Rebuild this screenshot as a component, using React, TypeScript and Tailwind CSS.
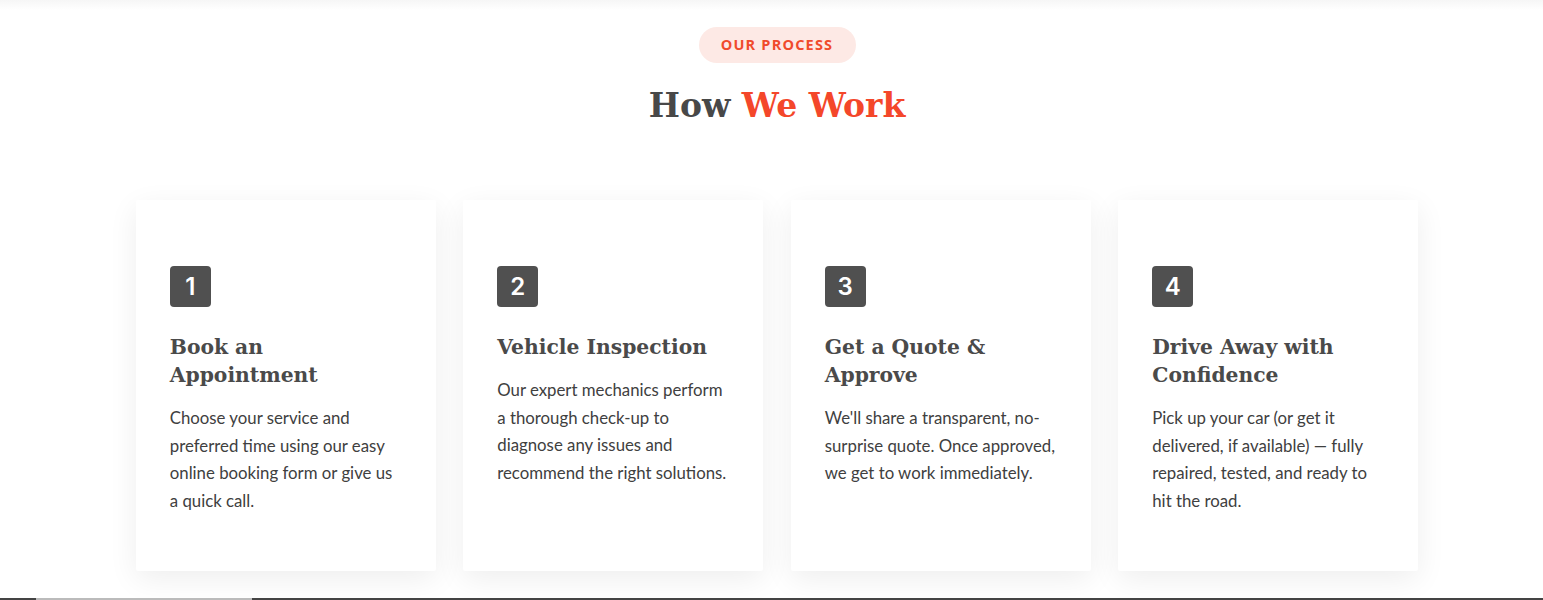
const steps = [
  {
    n: "1",
    title: "Book an Appointment",
    text: "Choose your service and preferred time using our easy online booking form or give us a quick call.",
  },
  {
    n: "2",
    title: "Vehicle Inspection",
    text: "Our expert mechanics perform a thorough check-up to diagnose any issues and recommend the right solutions.",
  },
  {
    n: "3",
    title: "Get a Quote & Approve",
    text: "We'll share a transparent, no-surprise quote. Once approved, we get to work immediately.",
  },
  {
    n: "4",
    title: "Drive Away with Confidence",
    text: "Pick up your car (or get it delivered, if available) — fully repaired, tested, and ready to hit the road.",
  },
]

export default function App() {
  return (
    <main className="relative h-[600px] w-full overflow-hidden bg-white font-['Lato',sans-serif]">
      <div className="h-[10px] w-full bg-gradient-to-b from-[#f6f6f6] to-white" />

      <section className="flex flex-col items-center pl-[11px]">
        <span className="mt-[17px] flex h-[36px] w-[157px] items-center justify-center rounded-full bg-[#fde9e5] font-['Open_Sans',sans-serif] text-[14.5px] font-bold tracking-[1.2px] text-[#f04b2c]">
          OUR PROCESS
        </span>
        <h2 className="mt-[21px] font-['DejaVu_Serif',serif] text-[33px] leading-[44px] font-bold text-[#484848]">
          How <span className="text-[#f4472a]">We Work</span>
        </h2>

        <div className="mt-[72px] grid grid-cols-4 gap-[27.5px]">
          {steps.map((s) => (
            <div
              key={s.n}
              className="w-[300px] rounded-[2px] bg-white pl-[34px] pr-[32px] pt-[66px] pb-[57px] shadow-[0_8px_30px_rgba(0,0,0,0.07)]"
            >
              <div className="flex h-[41px] w-[41px] items-center justify-center rounded-[4px] bg-[#505050] font-['Inter',sans-serif] text-[24px] font-semibold text-white">
                {s.n}
              </div>
              <h3 className="mt-[26px] font-['DejaVu_Serif',serif] text-[20.3px] leading-[28px] font-bold text-[#4a4a4a]">
                {s.title}
              </h3>
              <p className="mt-[15px] text-[16.8px] leading-[27.5px] text-[#404040]">{s.text}</p>
            </div>
          ))}
        </div>
      </section>

      <div className="absolute bottom-0 left-0 flex h-[2px] w-full bg-[#444]">
        <div className="ml-[36px] w-[216px] bg-[#bbb]" />
      </div>
    </main>
  )
}
